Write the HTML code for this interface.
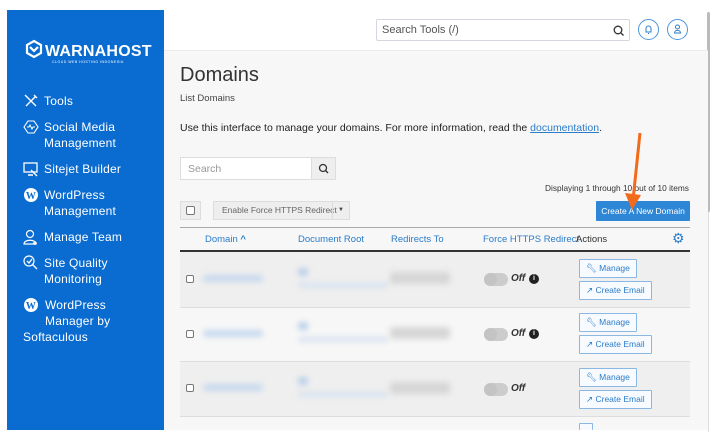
<!DOCTYPE html>
<html><head><style>
*{margin:0;padding:0;box-sizing:border-box}
body{width:720px;height:440px;overflow:hidden;background:#fff;font-family:"Liberation Sans",sans-serif;position:relative;color:#333}
.side{position:absolute;left:7px;top:10px;width:157px;height:420px;background:#0a6bd0;color:#fff}
.logo{position:absolute;left:17px;top:29px;font-weight:bold;font-size:16px;letter-spacing:0.2px}
.logo small{display:block;font-size:3.5px;font-weight:normal;margin-left:28px;letter-spacing:0.5px;margin-top:-1px}
.nav{position:absolute;left:16px;font-size:12px;line-height:16px;letter-spacing:0.2px}
.nav .ic{position:absolute;left:0;top:0;width:16px;height:16px}
.nav span{display:block;padding-left:21px}
.main{position:absolute;left:164px;top:50px;width:544px;height:380px;background:#f7f7f7;border-top:1px solid #ececec}
.scroll{position:absolute;left:707px;top:12px;width:3px;height:200px;background:#bbb;border-radius:2px}
.scroll2{position:absolute;left:708px;top:12px;width:1px;height:420px;background:#ddd}
.a{position:absolute}
.link{color:#2b7cc9}
.btn{position:absolute;border:1px solid #8ab8e2;background:#f7fbff;color:#2b7cc9;font-size:8.5px;height:19px;line-height:17px;padding:0 6px;border-radius:1px}
.row{position:absolute;left:180px;width:510px;border-top:1px solid #ddd}
.blur{position:absolute;filter:blur(3px);border-radius:3px}
.tog{position:absolute;width:24px;height:13px;border-radius:7px;background:#ccc}
.tog:before{content:"";position:absolute;left:0;top:0;width:13px;height:13px;border-radius:50%;background:#c4c4c4}
.off{position:absolute;font-style:italic;font-weight:bold;font-size:10px;color:#333}
.cb{position:absolute;width:8px;height:8px;border:1px solid #777;border-radius:2px;background:#fff}
</style></head><body>
<div class="scroll2"></div><div class="scroll"></div>
<div class="side">
 <div class="logo"><svg width="20" height="20" viewBox="0 0 20 20" style="vertical-align:-3px;margin-right:1px"><path d="M10 2L17 6V14L10 18L3 14V6Z M6 8 10 12 14 8" fill="none" stroke="#fff" stroke-width="2.2"/></svg>WARNAHOST<small>CLOUD WEB HOSTING INDONESIA</small></div>
 <div class="nav" style="top:83px"><svg class="ic" viewBox="0 0 16 16"><path d="M3 3L13 13M13 3L3 13M2 2L5 5M11 2L14 5" stroke="#fff" stroke-width="1.4" fill="none"/></svg><span>Tools</span></div>
 <div class="nav" style="top:109px"><svg class="ic" viewBox="0 0 16 16"><path d="M5 2H11L15 8L11 14H5L1 8Z" stroke="#fff" stroke-width="1.1" fill="none"/><path d="M4 8H6L7 6L9 10L10 8H12" stroke="#fff" fill="none"/></svg><span>Social Media<br>Management</span></div>
 <div class="nav" style="top:151px"><svg class="ic" viewBox="0 0 16 16"><rect x="1" y="2" width="13" height="9" stroke="#fff" fill="none" stroke-width="1.3"/><path d="M5 14H10M8 9L14 15" stroke="#fff" stroke-width="1.4"/></svg><span>Sitejet Builder</span></div>
 <div class="nav" style="top:177px"><svg class="ic" viewBox="0 0 16 16"><circle cx="8" cy="8" r="7" fill="#fff"/><text x="8" y="12" font-size="10" font-weight="bold" fill="#0a6bd0" text-anchor="middle" font-family="Liberation Serif">W</text></svg><span>WordPress<br>Management</span></div>
 <div class="nav" style="top:219px"><svg class="ic" viewBox="0 0 16 16"><circle cx="7" cy="5" r="3.5" stroke="#fff" fill="none" stroke-width="1.2"/><path d="M1 15C1 10 13 10 13 15ZM12 12V16M10 14H14" stroke="#fff" fill="none" stroke-width="1.2"/></svg><span>Manage Team</span></div>
 <div class="nav" style="top:245px"><svg class="ic" viewBox="0 0 16 16"><circle cx="6" cy="6" r="5" stroke="#fff" fill="none" stroke-width="1.2"/><path d="M4 6L6 8L9 4M9.5 9.5L14 14" stroke="#fff" fill="none" stroke-width="1.3"/></svg><span>Site Quality<br>Monitoring</span></div>
 <div class="nav" style="top:287px;left:16px"><svg class="ic" viewBox="0 0 16 16"><circle cx="8" cy="8" r="7" fill="#fff"/><text x="8" y="12" font-size="10" font-weight="bold" fill="#0a6bd0" text-anchor="middle" font-family="Liberation Serif">W</text></svg><span style="padding-left:22px">WordPress<br>Manager by</span><span style="padding-left:0">Softaculous</span></div>
</div>
<div class="main"></div>
<div class="a" style="left:376px;top:19px;width:254px;height:22px;border:1px solid #d6d6e0;border-radius:2px;background:#fff;font-size:11px;color:#555;padding:4px 5px">Search Tools (/)<svg style="position:absolute;right:5px;top:5px" width="11" height="11" viewBox="0 0 11 11"><circle cx="5" cy="5" r="3.8" stroke="#333" stroke-width="1.3" fill="none"/><path d="M8 8L10.5 10.5" stroke="#333" stroke-width="1.3"/></svg></div>
<div class="a" style="left:638px;top:19px;width:21px;height:21px;border:1px solid #4d96de;border-radius:50%"><svg width="19" height="19" viewBox="0 0 19 19"><path d="M7 12V8.5A2.5 2.5 0 0 1 12 8.5V12H6.5H12.5M9 13.5H10" stroke="#2b7cc9" fill="none"/></svg></div>
<div class="a" style="left:667px;top:19px;width:21px;height:21px;border:1px solid #4d96de;border-radius:50%"><svg width="19" height="19" viewBox="0 0 19 19"><circle cx="9.5" cy="7" r="2" stroke="#2b7cc9" fill="none"/><path d="M6.5 13C6.5 9.5 12.5 9.5 12.5 13Z" stroke="#2b7cc9" fill="none"/></svg></div>
<div class="a" style="left:180px;top:64px;font-size:20px;color:#333">Domains</div>
<div class="a" style="left:180px;top:93px;font-size:9.5px;color:#444">List Domains</div>
<div class="a" style="left:180px;top:122px;font-size:10.5px;color:#222">Use this interface to manage your domains. For more information, read the <span class="link" style="text-decoration:underline">documentation</span>.</div>
<div class="a" style="left:180px;top:157px;width:132px;height:23px;border:1px solid #ddd;background:#fff;font-size:10.5px;color:#999;padding:5px 7px">Search</div>
<div class="a" style="left:311px;top:157px;width:25px;height:23px;border:1px solid #ddd;background:#eee"><svg width="23" height="21" viewBox="0 0 23 21"><circle cx="11" cy="10" r="3.5" stroke="#333" stroke-width="1.3" fill="none"/><path d="M13.5 12.5L16 15" stroke="#333" stroke-width="1.4"/></svg></div>
<div class="a" style="left:545px;top:183px;font-size:8.3px;color:#333">Displaying 1 through 10 out of 10 items</div>
<div class="a" style="left:180px;top:201px;width:21px;height:19px;border:1px solid #ddd;background:#eee"><div class="cb" style="left:5px;top:4px;width:9px;height:9px"></div></div>
<div class="a" style="left:213px;top:201px;width:137px;height:19px;border:1px solid #ddd;background:#eee;font-size:8.5px;color:#666;line-height:17px;padding-left:8px">Enable Force HTTPS Redirect<span style="position:absolute;left:118px;top:0;width:17px;height:17px;border-left:1px solid #ddd;text-align:center;font-size:6px;color:#444">▼</span></div>
<div class="a" style="left:596px;top:201px;width:94px;height:20px;background:#2d86d6;color:#fff;font-size:8.5px;line-height:20px;text-align:center;border-radius:1px">Create A New Domain</div>
<svg class="a" style="left:620px;top:130px" width="25" height="85" viewBox="0 0 25 85"><path d="M20 3L13 70" stroke="#f26a1b" stroke-width="3"/><path d="M5 63L12 80L21 65Z" fill="#f26a1b"/></svg>
<div class="row" style="top:227px;height:25px;border-top:1px solid #aaa;border-bottom:2px solid #333;font-size:9.5px">
 <span class="a link" style="left:25px;top:6px">Domain <b>^</b></span>
 <span class="a link" style="left:118px;top:6px">Document Root</span>
 <span class="a link" style="left:211px;top:6px">Redirects To</span>
 <span class="a link" style="left:303px;top:6px">Force HTTPS Redirect</span>
 <span class="a" style="left:396px;top:6px">Actions</span>
 <span class="a link" style="left:492px;top:2px;font-size:14px">⚙</span>
</div>
<div class="row" style="top:252px;height:55px;background:#efefef;border-top:none"></div>
<div class="row" style="top:307px;height:54px;background:#f7f7f7"></div>
<div class="row" style="top:361px;height:55px;background:#efefef"></div>
<div class="row" style="top:416px;height:14px;background:#f7f7f7"></div>
<div class="a" style="left:164px;top:430px;width:544px;height:10px;background:#fff"></div>

<div class="cb" style="left:186px;top:275px"></div>
<div class="blur" style="left:203px;top:275px;width:60px;height:7px;background:#c7d9ee"></div>
<div class="blur" style="left:298px;top:268px;width:10px;height:8px;background:#b8d0ea"></div>
<div class="blur" style="left:298px;top:283px;width:90px;height:5px;background:#d5e2f0"></div>
<div class="blur" style="left:390px;top:272px;width:60px;height:12px;background:#d6d6d6"></div>
<div class="tog" style="left:484px;top:273px"></div><div class="off" style="left:511px;top:273px">Off</div><div class="a" style="left:529px;top:274px;width:10px;height:10px;border-radius:50%;background:#222;color:#fff;font-size:7px;text-align:center;line-height:10px;font-weight:bold">i</div>
<div class="btn" style="left:579px;top:259px">🔧︎ Manage</div>
<div class="btn" style="left:579px;top:281px">↗ Create Email</div>

<div class="cb" style="left:186px;top:330px"></div>
<div class="blur" style="left:203px;top:330px;width:60px;height:7px;background:#c7d9ee"></div>
<div class="blur" style="left:298px;top:322px;width:10px;height:8px;background:#b8d0ea"></div>
<div class="blur" style="left:298px;top:337px;width:90px;height:5px;background:#d5e2f0"></div>
<div class="blur" style="left:390px;top:327px;width:60px;height:12px;background:#d6d6d6"></div>
<div class="tog" style="left:484px;top:328px"></div><div class="off" style="left:511px;top:328px">Off</div><div class="a" style="left:529px;top:329px;width:10px;height:10px;border-radius:50%;background:#222;color:#fff;font-size:7px;text-align:center;line-height:10px;font-weight:bold">i</div>
<div class="btn" style="left:579px;top:313px">🔧︎ Manage</div>
<div class="btn" style="left:579px;top:335px">↗ Create Email</div>

<div class="cb" style="left:186px;top:384px"></div>
<div class="blur" style="left:203px;top:384px;width:60px;height:7px;background:#c7d9ee"></div>
<div class="blur" style="left:298px;top:377px;width:10px;height:8px;background:#b8d0ea"></div>
<div class="blur" style="left:298px;top:392px;width:90px;height:5px;background:#d5e2f0"></div>
<div class="blur" style="left:390px;top:382px;width:60px;height:12px;background:#d6d6d6"></div>
<div class="tog" style="left:484px;top:383px"></div><div class="off" style="left:511px;top:383px">Off</div>
<div class="btn" style="left:579px;top:368px">🔧︎ Manage</div>
<div class="btn" style="left:579px;top:390px">↗ Create Email</div>
<div class="btn" style="left:579px;top:423px;height:7px;border-bottom:none"></div>
</body></html>
